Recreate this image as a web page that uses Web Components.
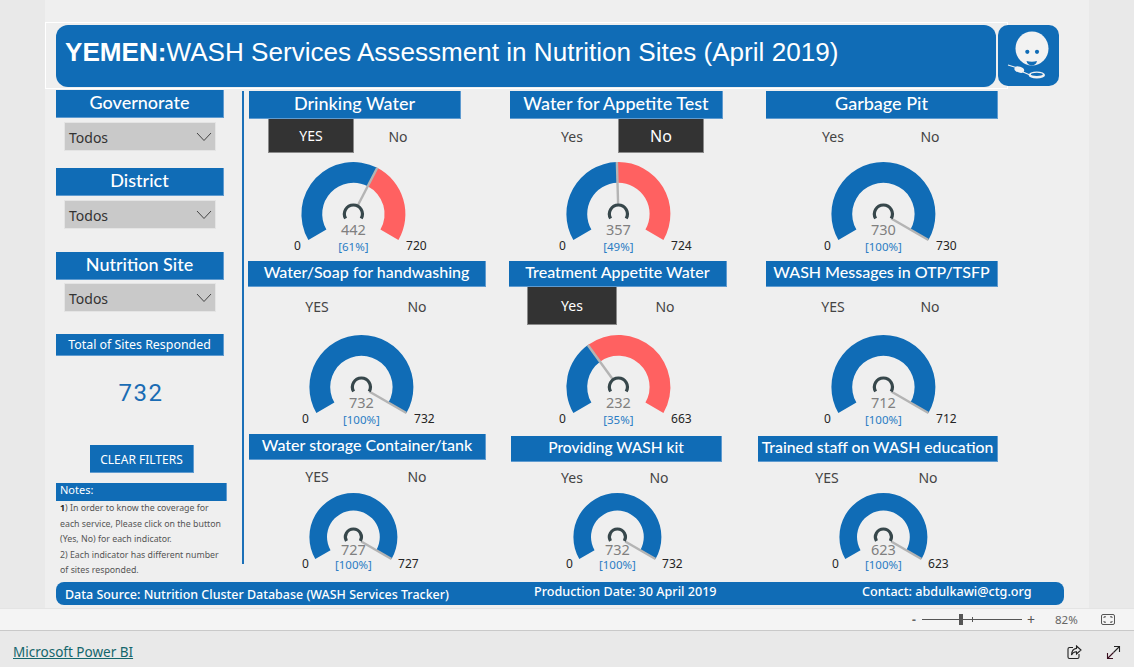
<!DOCTYPE html>
<html>
<head>
<meta charset="utf-8">
<title>WASH Services Assessment</title>
<style>
  html, body { margin: 0; padding: 0; }
  body { width: 1134px; height: 667px; overflow: hidden; background: #e9e9e9; font-family: "Noto Sans", "Open Sans", sans-serif; }
</style>
</head>
<body>

<wash-report>
  <report-title slot="title"><b>YEMEN:</b>WASH Services Assessment in Nutrition Sites (April 2019)</report-title>

  <side-panel slot="side">
    <bi-header size="big" style="--w:168px;--h:28px">Governorate</bi-header>
    <bi-dropdown style="--top:4px"></bi-dropdown>
    <bi-header size="big" style="--w:168px;--h:28px;--top:17px">District</bi-header>
    <bi-dropdown style="--top:4px"></bi-dropdown>
    <bi-header size="big" style="--w:168px;--h:28px;--top:23px">Nutrition Site</bi-header>
    <bi-dropdown style="--top:3px"></bi-dropdown>
    <bi-header size="small" style="--w:168px;--h:22px;--top:22px">Total of Sites Responded</bi-header>
    <total-card>732</total-card>
    <clear-button>CLEAR FILTERS</clear-button>
    <notes-card></notes-card>
  </side-panel>

  <wash-tile slot="tile" label="Drinking Water" head-x="1" head-w="212" head-h="28" head-size="18" toggle-x="20" gap="1" toggle-h="34"
    yes="YES" no="No" selected="yes" gauge-x="105" gauge-top="1" value="442" max="720"></wash-tile>
  <wash-tile slot="tile" label="Water for Appetite Test" head-x="1" head-w="213" head-h="28" head-size="18" toggle-x="20" gap="3" toggle-h="34"
    yes="Yes" no="No" selected="no" on-size="16" gauge-x="109" gauge-top="1" value="357" max="724"></wash-tile>
  <wash-tile slot="tile" label="Garbage Pit" head-x="8" head-w="232" head-h="28" head-size="18" toggle-x="32" gap="11" toggle-h="34"
    yes="Yes" no="No" gauge-x="125" gauge-top="1" value="730" max="730"></wash-tile>

  <wash-tile slot="tile" label="Water/Soap for handwashing" head-x="0" head-w="238" head-h="26" head-size="16" toggle-x="26" gap="14" toggle-h="38"
    yes="YES" no="No" gauge-x="113" gauge-top="2" value="732" max="732"></wash-tile>
  <wash-tile slot="tile" label="Treatment Appetite Water" head-x="0" head-w="218" head-h="26" head-size="16" toggle-x="18" gap="3" toggle-h="38" toggle-w="90"
    yes="Yes" no="No" selected="yes" gauge-x="109" gauge-top="2" value="232" max="663"></wash-tile>
  <wash-tile slot="tile" label="WASH Messages in OTP/TSFP" head-x="8" head-w="232" head-h="26" head-size="16" toggle-x="32" gap="11" toggle-h="38"
    yes="YES" no="No" gauge-x="125" gauge-top="2" value="712" max="712"></wash-tile>

  <wash-tile slot="tile" label="Water storage Container/tank" head-x="1" head-w="237" head-h="26" head-size="16" toggle-x="26" gap="14" toggle-h="32"
    yes="YES" no="No" gauge-x="105" gauge-top="0" radius="44" value="727" max="727"></wash-tile>
  <wash-tile slot="tile" label="Providing WASH kit" head-x="2" head-w="211" head-h="26" head-y="2" head-size="15.5" toggle-x="20" gap="1" toggle-h="30"
    yes="Yes" no="No" gauge-x="108" gauge-top="0" radius="44" value="732" max="732"></wash-tile>
  <wash-tile slot="tile" label="Trained staff on WASH education" head-x="0" head-w="240" head-h="26" head-y="2" head-size="15.8" toggle-x="26" gap="15" toggle-h="30"
    yes="YES" no="No" gauge-x="125" gauge-top="0" radius="44" value="623" max="623"></wash-tile>

  <source-bar slot="bar"></source-bar>
</wash-report>

<status-bar></status-bar>
<bi-footer></bi-footer>

<script>
const BLUE = "#106cb6";
const RED = "#ff6161";

//wash-report: el lienzo con titulo, panel, rejilla y barra inferior
const reportTemplate = document.createElement("template");
reportTemplate.innerHTML = `
<style>
  :host { display: block; box-sizing: border-box; width: 1044px; height: 608px; margin-left: 45px; background: #efefef; padding: 25px 0 0 11px; position: relative; }
  .outline { position: absolute; left: 0; top: 22px; width: 961px; height: 65px; border: 1px solid #fff; pointer-events: none; }
  .top { display: flex; gap: 2px; position: relative; }
  .logo { width: 61px; height: 61px; border-radius: 10px; background: ${BLUE}; display: block; }
  .main { display: flex; margin-top: 3px; height: 492px; }
  .rule { width: 2px; height: 473px; background: #1b70b8; margin: 1px 0 0 15px; }
  .board { display: grid; grid-template-columns: 261px 249px 240px; grid-template-rows: 170px 173px 148px; margin: 1px 0 0 4px; }
</style>
<div class="outline"></div>
<div class="top">
  <slot name="title"></slot>
  <svg class="logo" viewBox="998 25 61 61">
    <ellipse cx="1032" cy="48.5" rx="16.5" ry="17" fill="#f2f2f2"/>
    <circle cx="1027.3" cy="51.8" r="2.1" fill="${BLUE}"/>
    <circle cx="1037" cy="51.8" r="2.1" fill="${BLUE}"/>
    <path d="M1026.5 61 Q1032 62.6 1037 61 Q1036 65.4 1031.8 65.4 Q1027.5 65.4 1026.5 61Z" fill="${BLUE}"/>
    <path d="M1008 65 L1016 67.5 M1023 72 L1030 75" stroke="#f2f2f2" stroke-width="1.1" fill="none"/>
    <ellipse cx="1019.3" cy="69.6" rx="5" ry="2.9" transform="rotate(18 1019.3 69.6)" fill="#f2f2f2"/>
    <ellipse cx="1036.8" cy="75" rx="8.2" ry="3.6" fill="#f2f2f2"/>
    <ellipse cx="1036.8" cy="74.4" rx="6" ry="1.6" fill="${BLUE}"/>
  </svg>
</div>
<div class="main">
  <slot name="side"></slot>
  <div class="rule"></div>
  <div class="board"><slot name="tile"></slot></div>
</div>
<slot name="bar"></slot>
`;

class WashReport extends HTMLElement {
  constructor() {
    super();
    this.attachShadow({ mode: "open" }).appendChild(reportTemplate.content.cloneNode(true));
  }
}

//report-title
const titleTemplate = document.createElement("template");
titleTemplate.innerHTML = `
<style>
  :host { display: flex; align-items: center; box-sizing: border-box; width: 940px; height: 62px; padding: 0 0 8px 9px; background: ${BLUE}; color: #fff; border-radius: 12px; font: 26.1px "Liberation Sans", Arial, sans-serif; white-space: pre; }
  ::slotted(b) { font-weight: 700; }
</style>
<span><slot></slot></span>
`;

class ReportTitle extends HTMLElement {
  constructor() {
    super();
    this.attachShadow({ mode: "open" }).appendChild(titleTemplate.content.cloneNode(true));
  }
}

//bi-header: la franja azul de cada seccion
const headerTemplate = document.createElement("template");
headerTemplate.innerHTML = `
<style>
  :host { display: flex; align-items: center; justify-content: center; box-sizing: border-box; width: var(--w); height: var(--h); margin-top: var(--top, 0); margin-left: var(--left, 0); padding-bottom: 4px; background: ${BLUE}; color: #fff; border-bottom: 1px solid #5f9bd0; border-right: 1px solid #5f9bd0; font: 500 var(--size, 18px) Lato, "Noto Sans", sans-serif; white-space: nowrap; }
  :host([size="big"]) { padding-bottom: 3px; }
  :host([size="small"]) { font: 12.4px "Noto Sans", sans-serif; padding-bottom: 1px; }
</style>
<slot></slot>
`;

class BiHeader extends HTMLElement {
  constructor() {
    super();
    this.attachShadow({ mode: "open" }).appendChild(headerTemplate.content.cloneNode(true));
  }
}

//bi-dropdown
const dropdownTemplate = document.createElement("template");
dropdownTemplate.innerHTML = `
<style>
  :host { display: flex; align-items: center; justify-content: space-between; box-sizing: border-box; width: 152px; height: 29px; margin: var(--top, 0) 0 0 8px; padding: 0 3px 0 4px; background: #c9c9c9; border: 1px solid #e4e4e4; color: #333; font: 14px "Noto Sans", sans-serif; }
  span { padding-top: 2px; }
  svg { display: block; }
</style>
<span>Todos</span>
<svg width="16" height="10" viewBox="0 0 16 10"><path d="M1 1 L8 8.5 L15 1" fill="none" stroke="#444" stroke-width="1"/></svg>
`;

class BiDropdown extends HTMLElement {
  constructor() {
    super();
    this.attachShadow({ mode: "open" }).appendChild(dropdownTemplate.content.cloneNode(true));
  }
}

//total-card
const totalTemplate = document.createElement("template");
totalTemplate.innerHTML = `
<style>
  :host { display: flex; align-items: center; justify-content: center; box-sizing: border-box; width: 168px; height: 71px; padding: 2px 0 0 2px; color: #1a6cb4; font: 24px Roboto, sans-serif; letter-spacing: 1.5px; }
</style>
<slot></slot>
`;

class TotalCard extends HTMLElement {
  constructor() {
    super();
    this.attachShadow({ mode: "open" }).appendChild(totalTemplate.content.cloneNode(true));
  }
}

//clear-button
const clearTemplate = document.createElement("template");
clearTemplate.innerHTML = `
<style>
  :host { display: flex; align-items: center; justify-content: center; box-sizing: border-box; width: 104px; height: 28px; margin: 18px 0 0 34px; padding-top: 2px; background: ${BLUE}; color: #fff; border-bottom: 1px solid #5f9bd0; border-right: 1px solid #5f9bd0; font: 12px "Noto Sans", sans-serif; }
</style>
<slot></slot>
`;

class ClearButton extends HTMLElement {
  constructor() {
    super();
    this.attachShadow({ mode: "open" }).appendChild(clearTemplate.content.cloneNode(true));
  }
}

//notes-card
const notesTemplate = document.createElement("template");
notesTemplate.innerHTML = `
<style>
  :host { display: block; width: 171px; margin-top: 10px; font-family: "Noto Sans", sans-serif; }
  .bar { box-sizing: border-box; height: 18px; padding: 0 4px; background: ${BLUE}; color: #fff; font-size: 11px; line-height: 14px; border-right: 1px solid #5f9bd0; }
  p { margin: 0; padding: 0 0 0 4px; color: #555; font-size: 8.8px; line-height: 15.5px; white-space: nowrap; }
  b { color: #222; }
</style>
<div class="bar">Notes:</div>
<p><b>1</b>) In order to know the coverage for<br>each service, Please click on the button<br>(Yes, No) for each indicator.<br>2) Each indicator has different number<br>of sites responded.</p>
`;

class NotesCard extends HTMLElement {
  constructor() {
    super();
    this.attachShadow({ mode: "open" }).appendChild(notesTemplate.content.cloneNode(true));
  }
}

//side-panel
const sideTemplate = document.createElement("template");
sideTemplate.innerHTML = `
<style>
  :host { display: flex; flex-direction: column; width: 171px; }
</style>
<slot></slot>
`;

class SidePanel extends HTMLElement {
  constructor() {
    super();
    this.attachShadow({ mode: "open" }).appendChild(sideTemplate.content.cloneNode(true));
  }
}

//gauge-dial: arco de 240 grados con aguja y etiquetas
function polar(cx, cy, r, deg) {
  const rad = deg * Math.PI / 180;
  return [cx + r * Math.cos(rad), cy - r * Math.sin(rad)];
}

function band(cx, cy, rOut, rIn, from, to) {
  const large = from - to > 180 ? 1 : 0;
  const [x1, y1] = polar(cx, cy, rOut, from);
  const [x2, y2] = polar(cx, cy, rOut, to);
  const [x3, y3] = polar(cx, cy, rIn, to);
  const [x4, y4] = polar(cx, cy, rIn, from);
  return `M${x1} ${y1} A${rOut} ${rOut} 0 ${large} 1 ${x2} ${y2} L${x3} ${y3} A${rIn} ${rIn} 0 ${large} 0 ${x4} ${y4}Z`;
}

class GaugeDial extends HTMLElement {
  constructor() {
    super();
    this.attachShadow({ mode: "open" });
  }

  connectedCallback() {
    const value = Number(this.getAttribute("value"));
    const max = Number(this.getAttribute("max"));
    const r = Number(this.getAttribute("radius") ?? 52);
    const inner = r * 0.6;
    const cx = 80.4;
    const cy = r === 52 ? 60 : 45;
    const ratio = value / max;
    const split = 210 - 240 * ratio;
    const pct = Math.round(ratio * 100);

    const redBand = ratio < 1 ? `<path d="${band(cx, cy, r, inner, split, -30)}" fill="${RED}"/>` : "";
    const [nx1, ny1] = polar(cx, cy, 9, split);
    const [nx2, ny2] = polar(cx, cy, r, split);
    const hubR = r === 52 ? 9 : 8;
    const [hx1, hy1] = polar(cx, cy, hubR, 210);
    const [hx2, hy2] = polar(cx, cy, hubR, -30);

    this.shadowRoot.innerHTML = `
      <style>
        :host { display: block; width: 160px; height: ${cy + r}px; }
        svg { display: block; overflow: visible; }
        text { font-family: "Noto Sans", sans-serif; text-anchor: middle; }
      </style>
      <svg width="160" height="${cy + r}">
        <path d="${band(cx, cy, r, inner, 210, split)}" fill="${BLUE}"/>
        ${redBand}
        <line x1="${nx1}" y1="${ny1}" x2="${nx2}" y2="${ny2}" stroke="#b4b4b4" stroke-width="2.4"/>
        <path d="M${hx1} ${hy1} A${hubR} ${hubR} 0 1 1 ${hx2} ${hy2}" fill="none" stroke="#37474b" stroke-width="3.2"/>
        <text x="${cx}" y="${cy + r * 0.3 + 5}" font-size="14.5" fill="#808080">${value}</text>
        <text x="${cx}" y="${cy + r * 0.64 + 4}" font-size="11.5" fill="#2a7cc4">[${pct}%]</text>
        <text x="${cx - r - 4}" y="${cy + r * 0.6 + 5}" font-size="12" fill="#252525">0</text>
        <text x="${cx + r + 11}" y="${cy + r * 0.6 + 5}" font-size="12" fill="#252525">${max}</text>
      </svg>`;
  }
}

//yes-no: el par de botones de cada indicador
class YesNo extends HTMLElement {
  constructor() {
    super();
    this.attachShadow({ mode: "open" });
  }

  connectedCallback() {
    const selected = this.getAttribute("selected");
    const w = this.getAttribute("button-w") ?? 86;
    const onSize = this.getAttribute("on-size") ?? 14;
    const option = (key, text) => `<div class="opt ${selected === key ? "on" : ""}">${text}</div>`;

    this.shadowRoot.innerHTML = `
      <style>
        :host { display: flex; }
        .opt { display: flex; align-items: center; justify-content: center; box-sizing: border-box; width: ${w}px; color: #444; font: 14px "Noto Sans", sans-serif; }
        .on { background: #333; color: #fff; border: 1px solid #8a8a8a; border-width: 0 1px 1px 1px; font-size: ${onSize}px; }
      </style>
      ${option("yes", this.getAttribute("yes"))}
      ${option("no", this.getAttribute("no"))}`;

    this.shadowRoot.querySelectorAll(".opt").forEach((opt, i) => {
      opt.addEventListener("click", () => {
        const event = new CustomEvent("toggle-change", { detail: { index: i } });
        this.dispatchEvent(event);
      });
    });
  }
}

//wash-tile: cabecera + botones + indicador
class WashTile extends HTMLElement {
  constructor() {
    super();
    this.attachShadow({ mode: "open" });
  }

  connectedCallback() {
    const attr = (name) => this.getAttribute(name);
    const radiusAttr = attr("radius") ? `radius="${attr("radius")}"` : "";
    const selectedAttr = attr("selected") ? `selected="${attr("selected")}"` : "";
    const buttonW = attr("toggle-w") ? `button-w="${attr("toggle-w")}"` : "";
    const onSize = attr("on-size") ? `on-size="${attr("on-size")}"` : "";
    const headY = attr("head-y") ?? 0;

    this.shadowRoot.innerHTML = `
      <style>
        :host { display: block; min-width: 0; }
        yes-no { margin-left: ${attr("toggle-x")}px; height: ${attr("toggle-h")}px; gap: ${attr("gap")}px; }
        gauge-dial { margin: ${attr("gauge-top")}px 0 0 ${attr("gauge-x") - 80}px; }
      </style>
      <bi-header style="--w:${attr("head-w")}px;--h:${attr("head-h")}px;--left:${attr("head-x")}px;--top:${headY}px;--size:${attr("head-size")}px">${attr("label")}</bi-header>
      <yes-no yes="${attr("yes")}" no="${attr("no")}" ${selectedAttr} ${buttonW} ${onSize}></yes-no>
      <gauge-dial value="${attr("value")}" max="${attr("max")}" ${radiusAttr}></gauge-dial>`;
  }
}

//source-bar
const barTemplate = document.createElement("template");
barTemplate.innerHTML = `
<style>
  :host { display: block; position: relative; box-sizing: border-box; width: 1008px; height: 23px; padding: 0 0 0 9px; background: ${BLUE}; color: #fff; border-radius: 8px; font: 500 12.6px/23px "Noto Sans", sans-serif; white-space: nowrap; }
  .row { display: flex; }
  .a { width: 469px; padding-top: 1px; font-size: 12.47px; }
  .b { width: 328px; margin-top: -2px; }
  .c { margin-top: -2px; }
</style>
<div class="row">
  <span class="a">Data Source: Nutrition Cluster Database (WASH Services Tracker)</span>
  <span class="b">Production Date: 30 April 2019</span>
  <span class="c">Contact: abdulkawi@ctg.org</span>
</div>
`;

class SourceBar extends HTMLElement {
  constructor() {
    super();
    this.attachShadow({ mode: "open" }).appendChild(barTemplate.content.cloneNode(true));
  }
}

//status-bar: zoom de la pagina
const statusTemplate = document.createElement("template");
statusTemplate.innerHTML = `
<style>
  :host { display: flex; align-items: center; box-sizing: border-box; height: 23px; background: #f4f4f4; border-top: 1px solid #e4e4e4; border-bottom: 1px solid #c9c9c9; color: #666; font: 12px "Noto Sans", sans-serif; padding-left: 912px; }
  .minus { width: 10px; font-weight: 700; }
  .track { position: relative; width: 100px; height: 1px; background: #555; }
  .thumb { position: absolute; left: 37px; top: -5px; width: 4px; height: 11px; background: #555; }
  .tick { position: absolute; left: 50px; top: -2px; width: 1px; height: 5px; background: #555; }
  .plus { width: 20px; margin-left: 5px; font-size: 14px; color: #555; }
  .pct { width: 46px; margin-left: 8px; font-size: 11.5px; }
  svg { display: block; }
</style>
<span class="minus">-</span>
<div class="track"><div class="thumb"></div><div class="tick"></div></div>
<span class="plus">+</span>
<span class="pct">82%</span>
<svg width="14" height="11" viewBox="0 0 14 11" fill="none" stroke="#555"><rect x="0.5" y="0.5" width="13" height="10" rx="1.5"/><path d="M3 4 V2.8 H5 M9 2.8 H11 V4 M3 7 V8.2 H5 M9 8.2 H11 V7"/></svg>
`;

class StatusBar extends HTMLElement {
  constructor() {
    super();
    this.attachShadow({ mode: "open" }).appendChild(statusTemplate.content.cloneNode(true));
  }
}

//bi-footer
const footerTemplate = document.createElement("template");
footerTemplate.innerHTML = `
<style>
  :host { display: flex; align-items: center; box-sizing: border-box; height: 36px; padding: 6px 13px 0; background: #e9e9e9; font: 13.5px "Noto Sans", sans-serif; }
  a { color: #14666c; text-decoration: underline; }
  .icons { display: flex; align-items: center; gap: 24px; margin-left: auto; margin-right: 0; }
  svg { display: block; }
</style>
<a href="#">Microsoft Power BI</a>
<div class="icons">
  <svg width="15" height="15" viewBox="0 0 15 15" fill="none" stroke="#222" stroke-width="1.1"><path d="M6 2.5 H2.5 Q1 2.5 1 4 V12 Q1 13.5 2.5 13.5 H10.5 Q12 13.5 12 12 V9"/><path d="M9.5 1 L14 5 L9.5 9 V6.8 Q6 6.6 4.5 10 Q4.8 4 9.5 3.4Z"/></svg>
  <svg width="15" height="15" viewBox="0 0 15 15" fill="none" stroke-width="1.1"><path d="M8 1.5 H13.5 V7 M13.5 1.5 L7.5 7.5" stroke="#222"/><path d="M7.5 7.5 L1.5 13.5 M1.5 8 V13.5 H7" stroke="#3a1020"/></svg>
</div>
`;

class BiFooter extends HTMLElement {
  constructor() {
    super();
    this.attachShadow({ mode: "open" }).appendChild(footerTemplate.content.cloneNode(true));
  }
}

window.customElements.define("bi-header", BiHeader);
window.customElements.define("bi-dropdown", BiDropdown);
window.customElements.define("total-card", TotalCard);
window.customElements.define("clear-button", ClearButton);
window.customElements.define("notes-card", NotesCard);
window.customElements.define("side-panel", SidePanel);
window.customElements.define("report-title", ReportTitle);
window.customElements.define("gauge-dial", GaugeDial);
window.customElements.define("yes-no", YesNo);
window.customElements.define("wash-tile", WashTile);
window.customElements.define("source-bar", SourceBar);
window.customElements.define("status-bar", StatusBar);
window.customElements.define("bi-footer", BiFooter);
window.customElements.define("wash-report", WashReport);
</script>
</body>
</html>
